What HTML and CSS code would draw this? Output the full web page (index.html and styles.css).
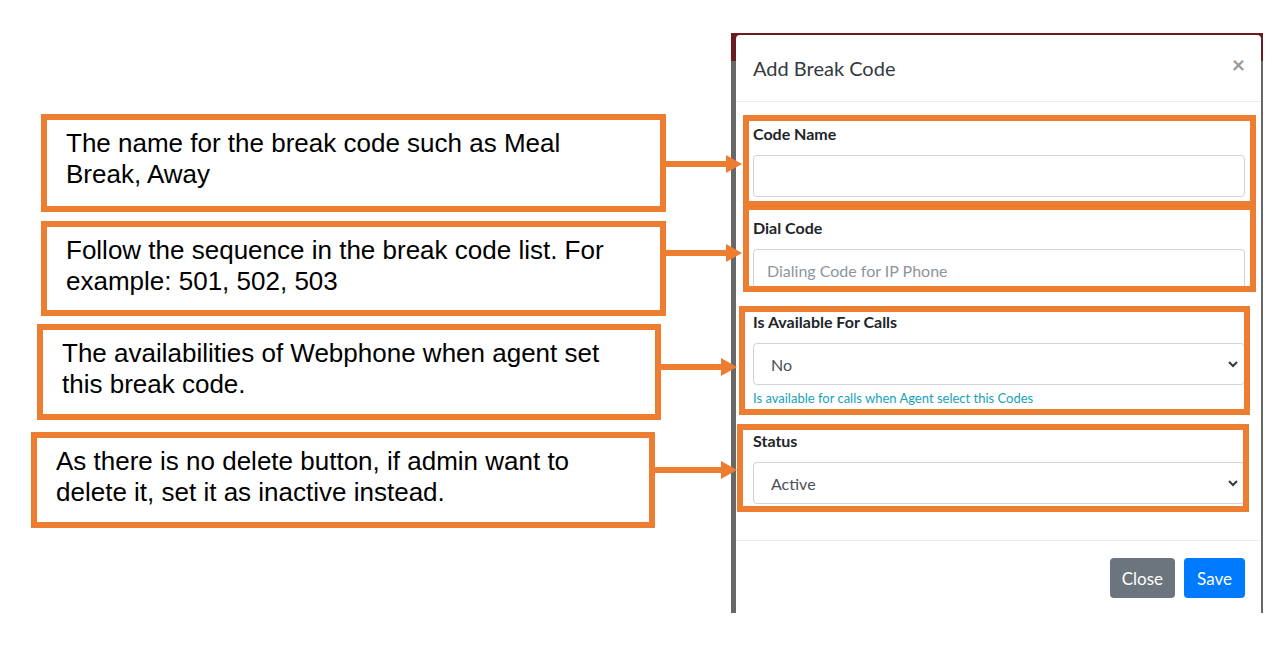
FILE: index.html
```html
<!DOCTYPE html>
<html lang="en">
<head>
    <meta charset="utf-8">
    <title>Add Break Code</title>
    <link rel="stylesheet" href="styles.css">
</head>
<body>
    <div class="slide">
        <div class="notes">
            <div class="note-row row-name">
                <p class="note">The name for the break code such as Meal<br>Break, Away</p>
                <svg class="arrow" width="76" height="18" viewBox="0 0 76 18"><rect x="0" y="6" width="62" height="6"/><polygon points="60,0 76,9 60,18"/></svg>
            </div>
            <div class="note-row row-dial">
                <p class="note">Follow the sequence in the break code list. For<br>example: 501, 502, 503</p>
                <svg class="arrow" width="76" height="18" viewBox="0 0 76 18"><rect x="0" y="6" width="62" height="6"/><polygon points="60,0 76,9 60,18"/></svg>
            </div>
            <div class="note-row row-avail">
                <p class="note">The availabilities of Webphone when agent set<br>this break code.</p>
                <svg class="arrow" width="76" height="18" viewBox="0 0 76 18"><rect x="0" y="6" width="62" height="6"/><polygon points="60,0 76,9 60,18"/></svg>
            </div>
            <div class="note-row row-status">
                <p class="note">As there is no delete button, if admin want to<br>delete it, set it as inactive instead.</p>
                <svg class="arrow" width="82" height="18" viewBox="0 0 82 18"><rect x="0" y="6" width="68" height="6"/><polygon points="66,0 82,9 66,18"/></svg>
            </div>
        </div>

        <div class="shot">
            <div class="modal">
                <div class="modal-header">
                    <h4 class="modal-title">Add Break Code</h4>
                    <span class="close">&times;</span>
                </div>
                <div class="modal-body">
                    <div class="form-group">
                        <label>Code Name</label>
                        <input class="form-control" type="text">
                    </div>
                    <div class="form-group">
                        <label>Dial Code</label>
                        <input class="form-control" type="text" placeholder="Dialing Code for IP Phone">
                    </div>
                    <div class="form-group">
                        <label>Is Available For Calls</label>
                        <div class="select-wrap">
                            <select class="form-control"><option>No</option><option>Yes</option></select>
                            <svg class="chevron" width="10" height="7" viewBox="0 0 10 7"><path d="M1 1l4 4 4-4"/></svg>
                        </div>
                        <small class="help">Is available for calls when Agent select this Codes</small>
                    </div>
                    <div class="form-group">
                        <label>Status</label>
                        <div class="select-wrap">
                            <select class="form-control"><option>Active</option><option>Inactive</option></select>
                            <svg class="chevron" width="10" height="7" viewBox="0 0 10 7"><path d="M1 1l4 4 4-4"/></svg>
                        </div>
                    </div>
                </div>
                <div class="modal-footer">
                    <button class="btn btn-secondary">Close</button>
                    <button class="btn btn-primary">Save</button>
                </div>
            </div>

            <!-- highlight frames over the form groups -->
            <div class="mark mark-name"></div>
            <div class="mark mark-dial"></div>
            <div class="mark mark-avail"></div>
            <div class="mark mark-status"></div>
        </div>
    </div>
</body>
</html>
```

FILE: styles.css
```css
body {
    margin: 0;
    background: #fff;
}
.slide {
    display: flex;
    width: 1280px;
    height: 669px;
    overflow: hidden;
}

/* callouts on the left */
.notes {
    width: 731px;
    flex: none;
    padding-top: 114px;
}
.note-row {
    display: flex;
    align-items: flex-start;
}
.note {
    flex: none;
    box-sizing: border-box;
    width: 625px;
    margin: 0;
    padding: 8px 0 0 19px;
    border: 6px solid #ed7d31;
    font-family: "Liberation Sans", Arial, sans-serif;
    font-size: 26px;
    line-height: 31px;
    color: #000;
    white-space: nowrap;
}
.arrow {
    flex: none;
    position: relative;
    z-index: 2;
    fill: #ed7d31;
}
.row-name { margin-left: 41px; }
.row-name .note { height: 98px; }
.row-name .arrow { margin-top: 41px; }

.row-dial { margin: 9px 0 0 41px; }
.row-dial .note { height: 95px; }
.row-dial .arrow { margin-top: 23px; }

.row-avail { margin: 8px 0 0 37px; }
.row-avail .note { height: 96px; width: 624px; }
.row-avail .arrow { margin-top: 34px; }

.row-status { margin: 12px 0 0 31px; }
.row-status .note { height: 96px; width: 624px; }
.row-status .arrow { margin-top: 29px; }

/* the dialog */
.shot {
    position: relative;
    flex: none;
    width: 532px;
    height: 580px;
    margin-top: 33px;
    overflow: hidden;
    background: linear-gradient(#6b1c21 0, #6b1c21 28px, #686868 28px);
}
.modal {
    margin: 2px 2px 0 5px;
    height: 600px;
    background: #fff;
    border-radius: 4px 4px 0 0;
    font-family: Lato, "Open Sans", sans-serif;
    color: #212529;
}
.modal-header {
    display: flex;
    justify-content: space-between;
    height: 66px;
    padding: 0 16px 0 17px;
    border-bottom: 1px solid #e9ecef;
}
.modal-title {
    margin: 18px 0 0;
    font-size: 20px;
    font-weight: 400;
    line-height: 30px;
    color: #343a40;
}
.close {
    margin-top: 14px;
    font-size: 23px;
    font-weight: 700;
    line-height: 30px;
    color: #999;
}
.modal-body {
    padding: 20px 16px 17px 17px;
}
.form-group {
    margin-bottom: 19px;
}
.form-group label {
    display: block;
    height: 24px;
    margin-bottom: 9px;
    font-size: 16px;
    font-weight: 700;
    line-height: 24px;
}
.form-control {
    display: block;
    box-sizing: border-box;
    width: 100%;
    height: 42px;
    margin: 0;
    padding: 0 13px;
    border: 1px solid #ced4da;
    border-radius: 4px;
    background: #fff;
    font-family: Lato, "Open Sans", sans-serif;
    font-size: 16px;
    color: #495057;
}
.form-control::placeholder {
    color: #8d959c;
}
select.form-control {
    appearance: none;
    -webkit-appearance: none;
    padding-left: 17px;
}
.select-wrap {
    position: relative;
}
.chevron {
    position: absolute;
    right: 7px;
    top: 18px;
    fill: none;
    stroke: #343a40;
    stroke-width: 2;
}
.help {
    display: block;
    margin-top: 4px;
    padding-bottom: 3px;
    font-size: 13px;
    line-height: 18px;
    color: #17a2b8;
}
.modal-footer {
    display: flex;
    justify-content: flex-end;
    gap: 9px;
    padding: 17px 16px 0 0;
    border-top: 1px solid #e9ecef;
}
.btn {
    height: 40px;
    padding: 0 12px;
    border: 0;
    border-radius: 4px;
    font-family: Lato, "Open Sans", sans-serif;
    font-size: 17px;
    color: #fff;
}
.btn-secondary { background: #6c757d; }
.btn-primary { background: #007bff; padding: 0 13px; }

/* orange frames drawn over the groups */
.mark {
    position: absolute;
    box-sizing: border-box;
    border: 6px solid #ed7d31;
}
.mark-name { left: 12px; top: 82px; width: 513px; height: 92px; }
.mark-dial { left: 12px; top: 171px; width: 513px; height: 88px; }
.mark-avail { left: 8px; top: 273px; width: 511px; height: 109px; }
.mark-status { left: 6px; top: 391px; width: 512px; height: 88px; }
```
